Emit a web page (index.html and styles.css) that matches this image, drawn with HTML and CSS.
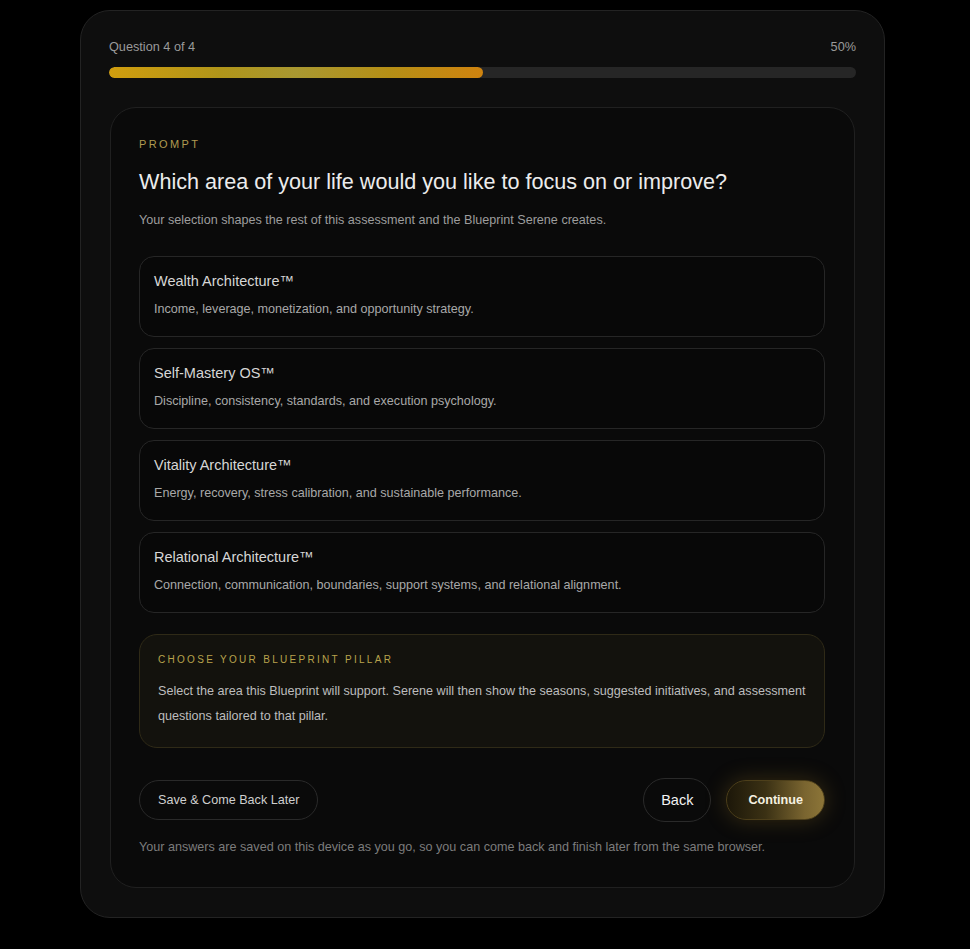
FILE: index.html
```html
<!DOCTYPE html>
<html lang="en">
<head>
<meta charset="utf-8">
<title>Assessment</title>
<link rel="stylesheet" href="styles.css">
</head>
<body>
<div class="page">
  <div class="shell">
    <div class="progress-head">
      <span>Question 4 of 4</span>
      <span>50%</span>
    </div>
    <div class="track"><div class="fill" style="width:50%"></div></div>

    <div class="panel">
      <div class="eyebrow">PROMPT</div>
      <h1 class="title">Which area of your life would you like to focus on or improve?</h1>
      <p class="sub">Your selection shapes the rest of this assessment and the Blueprint Serene creates.</p>

      <div class="options">
        <div class="option">
          <div class="opt-title">Wealth Architecture™</div>
          <div class="opt-desc">Income, leverage, monetization, and opportunity strategy.</div>
        </div>
        <div class="option">
          <div class="opt-title">Self-Mastery OS™</div>
          <div class="opt-desc">Discipline, consistency, standards, and execution psychology.</div>
        </div>
        <div class="option">
          <div class="opt-title">Vitality Architecture™</div>
          <div class="opt-desc">Energy, recovery, stress calibration, and sustainable performance.</div>
        </div>
        <div class="option">
          <div class="opt-title">Relational Architecture™</div>
          <div class="opt-desc">Connection, communication, boundaries, support systems, and relational alignment.</div>
        </div>
      </div>

      <div class="info">
        <div class="info-label">CHOOSE YOUR BLUEPRINT PILLAR</div>
        <p class="info-text">Select the area this Blueprint will support. Serene will then show the seasons, suggested initiatives, and assessment questions tailored to that pillar.</p>
      </div>

      <div class="actions">
        <button class="btn btn-ghost">Save &amp; Come Back Later</button>
        <div class="actions-right">
          <button class="btn btn-back">Back</button>
          <button class="btn btn-primary">Continue</button>
        </div>
      </div>

      <p class="note">Your answers are saved on this device as you go, so you can come back and finish later from the same browser.</p>
    </div>
  </div>
</div>
</body>
</html>
```

FILE: styles.css
```css
* { box-sizing: border-box; }
html, body {
  margin: 0;
  padding: 0;
  background: #000;
  font-family: "Liberation Sans", Arial, sans-serif;
}
.page {
  padding: 10px 0 32px 80px;
}
.shell {
  width: 805px;
  background: #0e0e0e;
  border: 1px solid #232323;
  border-radius: 30px;
  padding: 27px 28px 29px 28px;
}
.progress-head {
  display: flex;
  justify-content: space-between;
  font-size: 12.7px;
  line-height: 18px;
  color: #9a9a9a;
}
.track {
  margin-top: 11px;
  height: 11px;
  border-radius: 6px;
  background: #262626;
  overflow: hidden;
}
.fill {
  height: 100%;
  border-radius: 6px;
  background: linear-gradient(90deg, #d09d0e 0%, #b0951a 30%, #a99831 50%, #b58f16 75%, #cf830f 100%);
}
.panel {
  margin: 29px 0 0 1px;
  width: 745px;
  background: #0a0a0a;
  border: 1px solid #202020;
  border-radius: 26px;
  padding: 29px 29px 31px 28px;
}
.eyebrow {
  font-size: 11px;
  line-height: 14px;
  letter-spacing: 2.4px;
  color: #b09a50;
}
.title {
  margin: 17px 0 0;
  font-size: 21.6px;
  line-height: 28px;
  font-weight: 400;
  color: #ececec;
}
.sub {
  margin: 15px 0 0;
  font-size: 12.6px;
  line-height: 18px;
  color: #9d9d9d;
}
.options {
  margin-top: 27px;
  display: flex;
  flex-direction: column;
  gap: 11px;
}
.option {
  background: #080808;
  border: 1px solid #262626;
  border-radius: 15px;
  padding: 15px 14px 18px;
}
.opt-title {
  font-size: 14.5px;
  line-height: 18px;
  color: #d6d6d6;
}
.opt-desc {
  margin-top: 10px;
  font-size: 12.6px;
  line-height: 18px;
  color: #a8a8a8;
}
.info {
  margin-top: 21px;
  background: #13120d;
  border: 1px solid #2f2a17;
  border-radius: 18px;
  padding: 18px 18px 18px;
}
.info-label {
  font-size: 10px;
  line-height: 14px;
  letter-spacing: 2.3px;
  color: #b8a34c;
}
.info-text {
  margin: 12px 0 0;
  font-size: 12.6px;
  line-height: 25px;
  color: #bdbdbd;
}
.actions {
  margin-top: 30px;
  display: flex;
  justify-content: space-between;
  align-items: center;
}
.actions-right {
  display: flex;
  align-items: center;
  gap: 15px;
}
.btn {
  font-family: "Liberation Sans", Arial, sans-serif;
  border-radius: 999px;
  cursor: pointer;
}
.btn-ghost {
  height: 40px;
  padding: 0 18px;
  background: #0a0a0a;
  border: 1px solid #2a2a2a;
  color: #cfcfcf;
  font-size: 12.6px;
}
.btn-back {
  height: 44px;
  padding: 0 17px;
  background: #0a0a0a;
  border: 1px solid #2a2a2a;
  color: #f2f2f2;
  font-size: 14.5px;
}
.btn-primary {
  height: 40px;
  padding: 0 21px;
  border: 1px solid #4d3f1a;
  background: linear-gradient(90deg, #1c1709 0%, #3b3114 40%, #7a6530 80%, #8c7538 100%);
  color: #f6f1e0;
  font-size: 12.6px;
  font-weight: 700;
  box-shadow: 0 0 22px rgba(170, 130, 40, 0.28);
}
.note {
  margin: 16px 0 0;
  font-size: 12.6px;
  line-height: 18px;
  color: #7c7c7c;
}
```
